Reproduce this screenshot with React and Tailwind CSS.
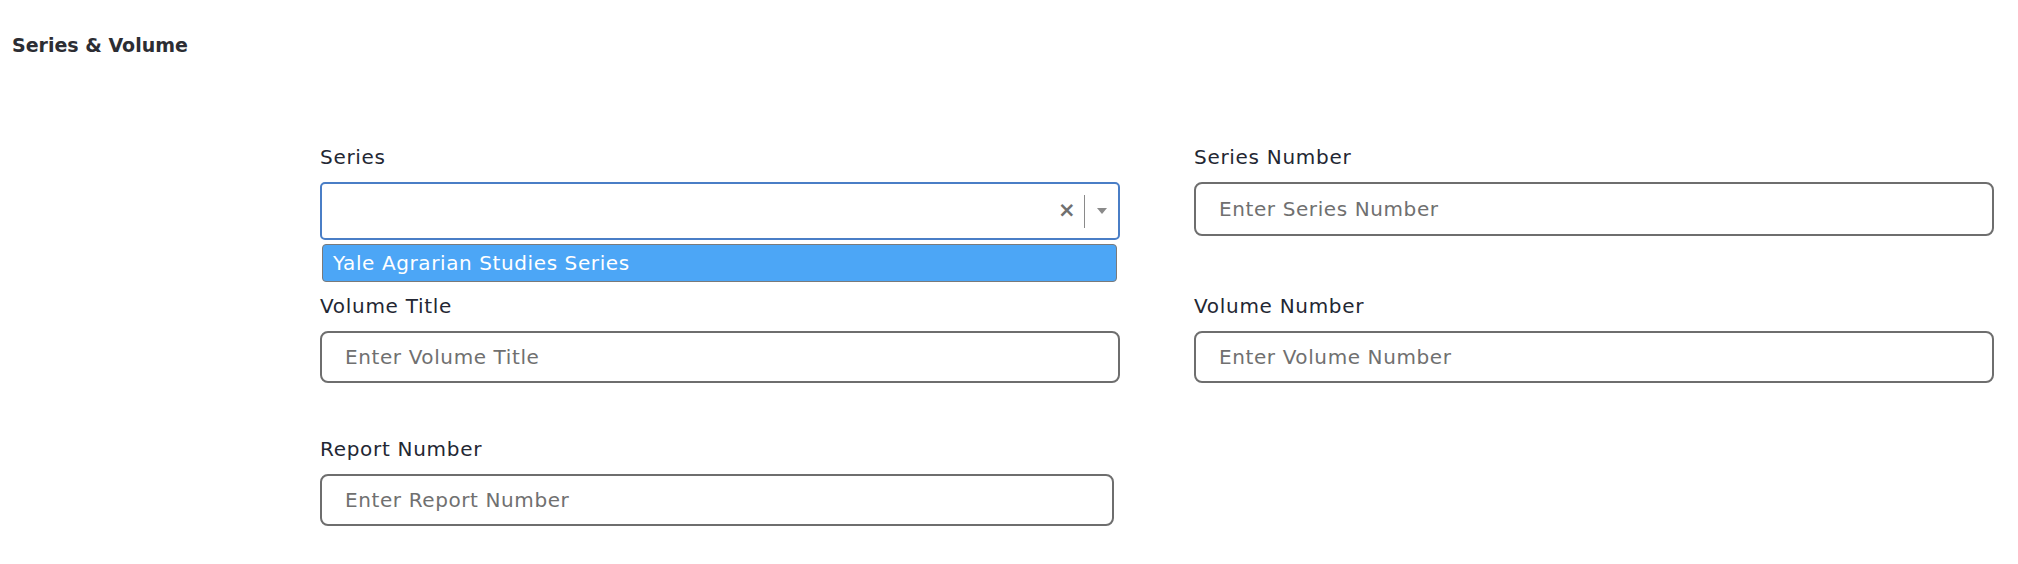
import React from "react";

const font = { fontFamily: '"DejaVu Sans", "Liberation Sans", sans-serif' };

function Label({ children }) {
  return (
    <div className="h-[24px] text-[20px] leading-[24px] tracking-[0.7px] text-[#232733]">
      {children}
    </div>
  );
}

function TextInput({ placeholder, h = "h-[52px]", w = "w-[800px]" }) {
  return (
    <input
      type="text"
      placeholder={placeholder}
      className={`${h} ${w} mt-[13px] block rounded-[8px] border-2 border-[#6e6e6e] bg-white pl-[23px] pr-3 text-[20px] tracking-[0.6px] text-[#333] outline-none placeholder:text-[#707070]`}
      style={font}
    />
  );
}

export default function App() {
  return (
    <div className="w-[2018px] h-[564px] bg-white overflow-hidden" style={font}>
      <div className="pt-[33px] pl-[12px] h-[24px] box-content text-[19px] leading-[24px] font-bold text-[#2c2d33]">
        Series &amp; Volume
      </div>
      <div className="mt-[88px] ml-[320px] grid grid-cols-[800px_800px] gap-x-[74px] gap-y-[54px]">
        <div>
          <Label>Series</Label>
          <div className="relative mt-[13px] h-[58px] w-[800px] rounded-[5px] border-2 border-[#4a7ec6] bg-white flex items-center justify-end">
            <div className="flex items-center h-full">
              <span className="text-[21px] leading-none font-bold text-[#707070] mr-[2px] mt-[-2px]">×</span>
              <div className="h-[33px] w-[1.5px] bg-[#8a8a8a] mx-[6px]"></div>
              <svg width="10" height="6" viewBox="0 0 10 6" className="ml-[6px] mr-[11px]">
                <path d="M0 0 L10 0 L5 6 Z" fill="#8a8a8a" />
              </svg>
            </div>
            <div className="absolute left-0 top-[calc(100%+6px)] w-[795px] h-[38px] rounded-[4px] border border-[#7a7a7a] bg-[#4ca6f6] pl-[10px] flex items-center text-[20px] tracking-[0.6px] text-white">
              Yale Agrarian Studies Series
            </div>
          </div>
        </div>
        <div>
          <Label>Series Number</Label>
          <TextInput placeholder="Enter Series Number" h="h-[54px]" />
        </div>
        <div>
          <Label>Volume Title</Label>
          <TextInput placeholder="Enter Volume Title" />
        </div>
        <div>
          <Label>Volume Number</Label>
          <TextInput placeholder="Enter Volume Number" />
        </div>
        <div>
          <Label>Report Number</Label>
          <TextInput placeholder="Enter Report Number" w="w-[794px]" />
        </div>
      </div>
    </div>
  );
}
